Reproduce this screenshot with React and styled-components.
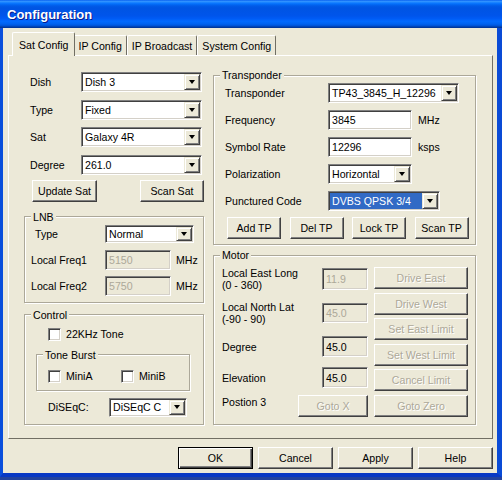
import React from 'react';
import styled, { createGlobalStyle } from 'styled-components';

const Global = createGlobalStyle`
  html, body { margin: 0; padding: 0; background: #1F3F9F; }
  body { font-family: "Liberation Sans", Arial, sans-serif; font-size: 10.6px; color: #000; }
  * { box-sizing: border-box; }
`;

const Screen = styled.div`
  width: 502px;
  height: 480px;
  overflow: hidden;
  display: flex;
  flex-direction: column;
  background: #23439E;
`;

const Window = styled.div`
  height: 477px;
  display: flex;
  flex-direction: column;
`;

const TitleBar = styled.div`
  height: 28px;
  flex: none;
  display: flex;
  align-items: center;
  padding-left: 7px;
  color: #fff;
  font-weight: bold;
  font-size: 13px;
  text-shadow: 1px 1px 0 #0A1A8A;
  background: linear-gradient(to bottom, #0058EE 0%, #3593FF 4%, #288EFF 7%, #127DFF 10%, #036FFC 14%, #0262EE 18%, #0057E5 24%, #0054E3 30%, #0055EB 56%, #005BF5 66%, #026AFE 76%, #0062EF 86%, #0052D6 92%, #0040AB 96%, #003092 100%);
`;

const Frame = styled.div`
  flex: 1;
  display: flex;
  border-left: 3px solid #0A4FDC;
  border-right: 5px solid #0A4BD6;
  border-bottom: 4px solid #0838C4;
`;

const Body = styled.div`
  flex: 1;
  display: flex;
  flex-direction: column;
  background: #ECE9D8;
  padding: 4px 4px 4px 5px;
`;

const TabRow = styled.div`
  display: flex;
  align-items: flex-end;
  height: 23px;
  padding-left: 6px;
`;

const Tab = styled.div`
  position: relative;
  z-index: ${p => (p.$active ? 2 : 1)};
  height: ${p => (p.$active ? 24 : 20)}px;
  margin: ${p => (p.$active ? '0 -2px -1px -2px' : '0')};
  padding: ${p => (p.$active ? '0 6px' : '0 4px')};
  display: flex;
  align-items: center;
  background: #ECE9D8;
  border-top: 1px solid #fff;
  border-left: 1px solid #fff;
  border-right: 1px solid #716F64;
  border-radius: 2px 2px 0 0;
  white-space: nowrap;
`;

const Panel = styled.div`
  height: 384px;
  border: 1px solid;
  border-color: #fff #716F64 #716F64 #fff;
  padding: 13px 16px 0 15px;
  display: grid;
  grid-template-columns: 180px 263px;
  column-gap: 9px;
  align-items: start;
`;

const Column = styled.div`
  display: flex;
  flex-direction: column;
`;

const Rows = styled.div`
  display: flex;
  flex-direction: column;
  gap: ${p => p.$gap}px;
  margin-top: ${p => p.$mt || 0}px;
`;

const Row = styled.div`
  display: flex;
  align-items: center;
  height: ${p => p.$h}px;
  margin-left: ${p => p.$ml || 0}px;
  margin-top: ${p => p.$mt || 0}px;
`;

const Label = styled.div`
  width: ${p => p.$w}px;
  flex: none;
  padding-left: ${p => p.$indent || 0}px;
  white-space: nowrap;
`;

const Unit = styled.div`
  margin-left: ${p => p.$gap || 6}px;
`;

const SelectBox = styled.div`
  width: ${p => p.$w}px;
  height: ${p => p.$h || 20}px;
  flex: none;
  display: flex;
  background: #fff;
  border: 1px solid;
  border-color: #808080 #fff #fff #808080;
  box-shadow: inset 1px 1px 0 #404040, inset -1px -1px 0 #D4D0C8;
  padding: 1px;
`;

const SelectValue = styled.div`
  flex: 1;
  display: flex;
  align-items: center;
  padding-left: 2px;
  background: ${p => (p.$hl ? '#316AC5' : 'transparent')};
  color: ${p => (p.$hl ? '#fff' : '#000')};
  white-space: nowrap;
  overflow: hidden;
`;

const DropBtn = styled.div`
  width: 16px;
  flex: none;
  display: flex;
  align-items: center;
  justify-content: center;
  background: #ECE9D8;
  border: 1px solid;
  border-color: #ECE9D8 #404040 #404040 #ECE9D8;
  box-shadow: inset 1px 1px 0 #fff, inset -1px -1px 0 #808080;
`;

const Arrow = styled.span`
  width: 0;
  height: 0;
  border-left: 3.5px solid transparent;
  border-right: 3.5px solid transparent;
  border-top: 4px solid #000;
`;

const TextBox = styled.div`
  width: ${p => p.$w}px;
  height: ${p => p.$h || 20}px;
  flex: none;
  margin-top: ${p => p.$mt || 0}px;
  display: flex;
  align-items: center;
  padding-left: 3px;
  background: ${p => (p.$disabled || p.$ro ? '#ECE9D8' : '#fff')};
  color: ${p => (p.$disabled ? '#ACA899' : '#000')};
  border: 1px solid;
  border-color: #808080 #fff #fff #808080;
  box-shadow: inset 1px 1px 0 #404040, inset -1px -1px 0 #D4D0C8;
`;

const Btn = styled.button`
  width: ${p => p.$w}px;
  height: ${p => p.$h || 22}px;
  flex: none;
  padding: 0;
  font-family: inherit;
  font-size: 10.6px;
  background: #ECE9D8;
  color: ${p => (p.disabled ? '#ACA899' : '#000')};
  text-shadow: ${p => (p.disabled ? '1px 1px 0 #fff' : 'none')};
  border: 1px solid;
  border-color: ${p => (p.$default ? '#000' : '#fff #404040 #404040 #fff')};
  box-shadow: ${p =>
    p.$default
      ? 'inset 1px 1px 0 #fff, inset -1px -1px 0 #404040, inset -2px -2px 0 #808080'
      : 'inset -1px -1px 0 #808080'};
  white-space: nowrap;
`;

const Group = styled.fieldset`
  margin: ${p => p.$mt || 0}px 0 0 0;
  padding: 0;
  min-width: 0;
  border: 1px solid #ACA899;
  box-shadow: inset 1px 1px 0 #fff, 1px 1px 0 #fff;
`;

const Legend = styled.legend`
  margin-left: 6px;
  padding: 0 2px;
  line-height: 12px;
  background: #ECE9D8;
  position: relative;
`;

const GroupBody = styled.div`
  padding: ${p => p.$pad};
  display: flex;
  flex-direction: ${p => (p.$row ? 'row' : 'column')};
  gap: ${p => p.$gap || 0}px;
`;

const SatButtons = styled.div`
  display: flex;
  justify-content: space-between;
  margin-top: 5px;
  padding-left: 8px;
`;

const ButtonRow = styled.div`
  display: flex;
  gap: ${p => p.$gap}px;
  margin-top: ${p => p.$mt || 0}px;
  margin-left: ${p => p.$ml || 0}px;
  justify-content: ${p => p.$justify || 'flex-start'};
`;

const Check = styled.span`
  width: 13px;
  height: 13px;
  flex: none;
  background: #fff;
  border: 1px solid;
  border-color: #808080 #fff #fff #808080;
  box-shadow: inset 1px 1px 0 #404040, inset -1px -1px 0 #D4D0C8;
`;

const CheckItem = styled.div`
  display: flex;
  align-items: center;
  gap: 5px;
  width: ${p => (p.$w ? `${p.$w}px` : 'auto')};
  height: 13px;
`;

const MotorWrap = styled.div`
  display: flex;
  gap: 6px;
`;

const MotorLeft = styled.div`
  width: 146px;
  display: flex;
  flex-direction: column;
`;

const MotorRow = styled.div`
  display: flex;
  justify-content: space-between;
  align-items: ${p => p.$align || 'center'};
  height: ${p => p.$h}px;
  margin-top: ${p => p.$mt || 0}px;
`;

const MotorLabel = styled.div`
  line-height: ${p => p.$lh || 12}px;
  white-space: nowrap;
`;

const MotorButtons = styled.div`
  width: 94px;
  display: flex;
  flex-direction: column;
  gap: 3.6px;
`;

const Select = ({ w, h, value, hl }) => (
  <SelectBox $w={w} $h={h}>
    <SelectValue $hl={hl}>{value}</SelectValue>
    <DropBtn>
      <Arrow />
    </DropBtn>
  </SelectBox>
);

const satRows = [
  ['Dish', 'Dish 3'],
  ['Type', 'Fixed'],
  ['Sat', 'Galaxy 4R'],
  ['Degree', '261.0'],
];

const motorButtons = ['Drive East', 'Drive West', 'Set East Limit', 'Set West Limit', 'Cancel Limit', 'Goto Zero'];

export default function App() {
  return (
    <>
      <Global />
      <Screen>
        <Window>
          <TitleBar>Configuration</TitleBar>
          <Frame>
            <Body>
              <TabRow>
                <Tab $active>Sat Config</Tab>
                <Tab>IP Config</Tab>
                <Tab>IP Broadcast</Tab>
                <Tab>System Config</Tab>
              </TabRow>
              <Panel>
                <Column>
                  <Rows $gap={7.67} $mt={3}>
                    {satRows.map(([l, v]) => (
                      <Row key={l} $h={20}>
                        <Label $w={57} $indent={6}>{l}</Label>
                        <Select w={121} value={v} />
                      </Row>
                    ))}
                  </Rows>
                  <SatButtons>
                    <Btn $w={65}>Update Sat</Btn>
                    <Btn $w={64}>Scan Sat</Btn>
                  </SatButtons>
                  <Group $mt={9}>
                    <Legend>LNB</Legend>
                    <GroupBody $pad="1px 0 6px 6px" $gap={6}>
                      <Row $h={20}>
                        <Label $w={74} $indent={4}>Type</Label>
                        <Select w={89} h={18} value="Normal" />
                      </Row>
                      <Row $h={20}>
                        <Label $w={74}>Local Freq1</Label>
                        <TextBox $w={66} $disabled>5150</TextBox>
                        <Unit $gap={5}>MHz</Unit>
                      </Row>
                      <Row $h={20}>
                        <Label $w={74}>Local Freq2</Label>
                        <TextBox $w={66} $disabled>5750</TextBox>
                        <Unit $gap={5}>MHz</Unit>
                      </Row>
                    </GroupBody>
                  </Group>
                  <Group $mt={6}>
                    <Legend>Control</Legend>
                    <GroupBody $pad="7px 13px 7px 11px">
                      <Row $h={13} $ml={12}>
                        <CheckItem>
                          <Check />
                          22KHz Tone
                        </CheckItem>
                      </Row>
                      <Group $mt={8}>
                        <Legend>Tone Burst</Legend>
                        <GroupBody $pad="9px 0 7px 11px" $row>
                          <CheckItem $w={73}>
                            <Check />
                            MiniA
                          </CheckItem>
                          <CheckItem>
                            <Check />
                            MiniB
                          </CheckItem>
                        </GroupBody>
                      </Group>
                      <Row $h={19} $ml={12} $mt={7}>
                        <Label $w={61}>DiSEqC:</Label>
                        <Select w={78} h={19} value="DiSEqC C" />
                      </Row>
                    </GroupBody>
                  </Group>
                </Column>

                <Column>
                  <Group>
                    <Legend>Transponder</Legend>
                    <GroupBody $pad="2px 0 5px 11px">
                      <Rows $gap={7}>
                        <Row $h={20}>
                          <Label $w={103}>Transponder</Label>
                          <Select w={131} value="TP43_3845_H_12296" />
                        </Row>
                        <Row $h={20}>
                          <Label $w={103}>Frequency</Label>
                          <TextBox $w={84}>3845</TextBox>
                          <Unit>MHz</Unit>
                        </Row>
                        <Row $h={20}>
                          <Label $w={103}>Symbol Rate</Label>
                          <TextBox $w={84}>12296</TextBox>
                          <Unit>ksps</Unit>
                        </Row>
                        <Row $h={20}>
                          <Label $w={103}>Polarization</Label>
                          <Select w={84} value="Horizontal" />
                        </Row>
                        <Row $h={20}>
                          <Label $w={103}>Punctured Code</Label>
                          <Select w={112} value="DVBS QPSK 3/4" hl />
                        </Row>
                      </Rows>
                      <ButtonRow $gap={8.5} $mt={6} $ml={2}>
                        <Btn $w={54}>Add TP</Btn>
                        <Btn $w={54}>Del TP</Btn>
                        <Btn $w={54}>Lock TP</Btn>
                        <Btn $w={54}>Scan TP</Btn>
                      </ButtonRow>
                    </GroupBody>
                  </Group>
                  <Group $mt={4}>
                    <Legend>Motor</Legend>
                    <GroupBody $pad="6px 7px 7px 8px">
                      <MotorWrap>
                        <MotorLeft>
                          <MotorRow $h={24} $align="flex-start">
                            <MotorLabel>Local East Long<br />(0 - 360)</MotorLabel>
                            <TextBox $w={46} $h={22} $mt={1} $disabled>11.9</TextBox>
                          </MotorRow>
                          <MotorRow $h={24} $mt={10} $align="flex-start">
                            <MotorLabel>Local North Lat<br />(-90 - 90)</MotorLabel>
                            <TextBox $w={46} $h={20} $mt={2} $disabled>45.0</TextBox>
                          </MotorRow>
                          <MotorRow $h={21} $mt={11}>
                            <MotorLabel>Degree</MotorLabel>
                            <TextBox $w={46} $h={21} $ro>45.0</TextBox>
                          </MotorRow>
                          <MotorRow $h={21} $mt={10}>
                            <MotorLabel>Elevation</MotorLabel>
                            <TextBox $w={46} $h={21} $ro>45.0</TextBox>
                          </MotorRow>
                          <MotorRow $h={22} $mt={7} $align="flex-start">
                            <MotorLabel $lh={14}>Postion 3</MotorLabel>
                            <Btn $w={70} disabled>Goto X</Btn>
                          </MotorRow>
                        </MotorLeft>
                        <MotorButtons>
                          {motorButtons.map(b => (
                            <Btn key={b} $w={94} disabled>{b}</Btn>
                          ))}
                        </MotorButtons>
                      </MotorWrap>
                    </GroupBody>
                  </Group>
                </Column>
              </Panel>
              <ButtonRow $gap={5} $mt={8} $justify="flex-end">
                <Btn $w={75} $default>OK</Btn>
                <Btn $w={75}>Cancel</Btn>
                <Btn $w={75}>Apply</Btn>
                <Btn $w={75}>Help</Btn>
              </ButtonRow>
            </Body>
          </Frame>
        </Window>
      </Screen>
    </>
  );
}
